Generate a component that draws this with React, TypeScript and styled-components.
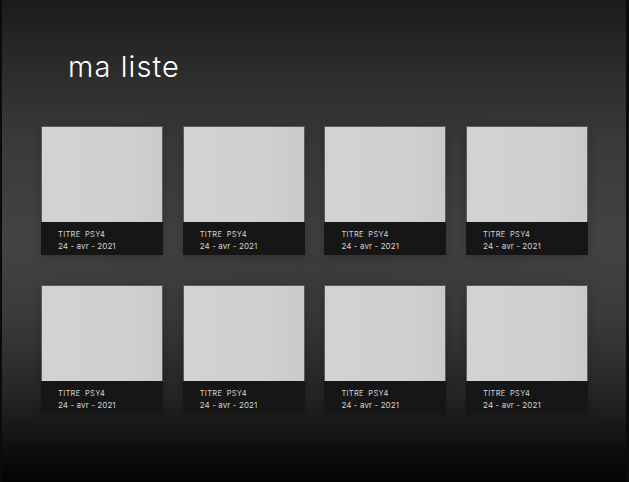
import React from "react";
import styled, { createGlobalStyle } from "styled-components";

const Global = createGlobalStyle`
  html, body { margin: 0; padding: 0; background: #0b0b0b; }
  body { font-family: "Inter", "Noto Sans", sans-serif; }
`;

const Page = styled.div`
  box-sizing: border-box;
  height: 482px;
  margin: 0 3px 0 2px;
  padding: 48px 0 0 39px;
  background:
    radial-gradient(ellipse 70% 60% at 50% 52%, rgba(0,0,0,0.08), rgba(0,0,0,0) 70%),
    linear-gradient(to bottom, #1b1b1b 0%, #2b2b2b 14%, #3a3a3a 30%, #434343 50%, #3a3a3a 66%, #252525 82%, #0f0f0f 93%, #030303 100%);
  overflow: hidden;
`;

const Title = styled.h1`
  margin: 0 0 40px 27px;
  font-family: "Inter", "Noto Sans", sans-serif;
  font-weight: 300;
  font-size: 29px;
  line-height: 38px;
  letter-spacing: 1.1px;
  color: #ffffff;
`;

const Grid = styled.div`
  display: grid;
  grid-template-columns: repeat(4, 122px);
  column-gap: 19.7px;
  row-gap: 30px;
`;

const Card = styled.div`
  display: flex;
  flex-direction: column;
  width: 122px;
  box-shadow: 0 2px 10px rgba(0, 0, 0, 0.2);
`;

const Thumb = styled.div`
  box-sizing: border-box;
  height: 96px;
  border: 1px solid #5c5c5c;
  border-bottom: none;
  background: linear-gradient(to right, #d2d2d2 0%, #d0d0d0 70%, #cacaca 100%);
`;

const Caption = styled.div`
  box-sizing: border-box;
  height: 33px;
  padding: 7px 0 0 17px;
  background: #161616;
  color: #d4d4d4;
  font-family: "Inter", "Noto Sans", sans-serif;
`;

const CardTitle = styled.div`
  font-size: 7.5px;
  line-height: 11px;
  letter-spacing: 0.3px;
  word-spacing: 2px;
`;

const CardDate = styled.div`
  font-size: 8px;
  line-height: 13px;
  letter-spacing: 0.1px;
`;

const items = Array.from({ length: 8 }, () => ({ title: "TITRE  PSY4", date: "24 - avr - 2021" }));

export default function App() {
  return (
    <>
      <Global />
      <Page>
        <Title>ma liste</Title>
        <Grid>
          {items.map((it, i) => (
            <Card key={i}>
              <Thumb />
              <Caption>
                <CardTitle>{it.title}</CardTitle>
                <CardDate>{it.date}</CardDate>
              </Caption>
            </Card>
          ))}
        </Grid>
      </Page>
    </>
  );
}
